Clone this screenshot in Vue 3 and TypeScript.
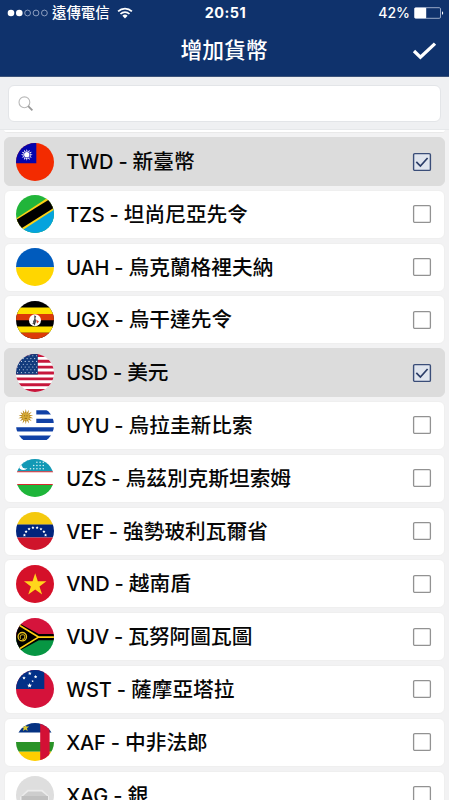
<script setup lang="ts">
interface Currency {
  code: string
  name: string
  selected?: boolean
}

const currencies: Currency[] = [
  { code: 'TWD', name: '新臺幣', selected: true },
  { code: 'TZS', name: '坦尚尼亞先令' },
  { code: 'UAH', name: '烏克蘭格裡夫納' },
  { code: 'UGX', name: '烏干達先令' },
  { code: 'USD', name: '美元', selected: true },
  { code: 'UYU', name: '烏拉圭新比索' },
  { code: 'UZS', name: '烏茲別克斯坦索姆' },
  { code: 'VEF', name: '強勢玻利瓦爾省' },
  { code: 'VND', name: '越南盾' },
  { code: 'VUV', name: '瓦努阿圖瓦圖' },
  { code: 'WST', name: '薩摩亞塔拉' },
  { code: 'XAF', name: '中非法郎' },
  { code: 'XAG', name: '銀' },
]

/** Points of a star with n tips centred on (cx, cy). */
function star(cx: number, cy: number, outer: number, inner: number, n = 5): string {
  const pts: string[] = []
  for (let i = 0; i < n * 2; i++) {
    const r = i % 2 ? inner : outer
    const a = (Math.PI * i) / n - Math.PI / 2
    pts.push(`${(cx + r * Math.cos(a)).toFixed(2)},${(cy + r * Math.sin(a)).toFixed(2)}`)
  }
  return pts.join(' ')
}

const usStars: [number, number][] = []
for (let r = 0; r < 7; r++) {
  for (let c = 0; c < 6; c++) usStars.push([1.6 + c * 3.8 + (r % 2) * 1.9, 1.8 + r * 2.8])
}

const uzStars: [number, number][] = []
for (let r = 0; r < 3; r++) {
  for (let c = 0; c < 5; c++) if (c >= 2 - r) uzStars.push([14.5 + c * 3.2, 3.2 + r * 3.3])
}

const veStars: [number, number][] = []
for (let i = 0; i < 8; i++) {
  const a = ((192 + i * 22.3) * Math.PI) / 180
  veStars.push([19 + 10.8 * Math.cos(a), 25.2 + 9.8 * Math.sin(a)])
}

const wsStars: [number, number, number][] = [
  [13.8, 3.4, 1.9],
  [8, 8, 1.8],
  [19.6, 6.8, 1.8],
  [16.6, 11.2, 1.2],
  [13.6, 15.6, 2.5],
]
</script>

<template>
  <div class="screen">
    <header class="top">
      <div class="status">
        <div class="carrier">
          <svg class="signal" width="42" height="10" viewBox="0 0 42 10">
            <circle cx="4" cy="5" r="3.3" fill="#fff" />
            <circle cx="12.3" cy="5" r="3.3" fill="#fff" />
            <g fill="none" stroke="#a9b7d3" stroke-width="0.8">
              <circle cx="20.6" cy="5" r="2.9" />
              <circle cx="29" cy="5" r="2.9" />
              <circle cx="37.4" cy="5" r="2.9" />
            </g>
          </svg>
          <span class="operator">遠傳電信</span>
          <svg class="wifi" width="16" height="12" viewBox="0 0 16 12">
            <g fill="none" stroke="#fff" stroke-width="1.7">
              <path d="M1.1 4.4a9.8 9.8 0 0 1 13.8 0" />
              <path d="M3.5 7a6.4 6.4 0 0 1 9 0" />
            </g>
            <path d="M5.4 8.8a3.7 3.7 0 0 1 5.2 0L8 11.5z" fill="#fff" />
          </svg>
        </div>
        <span class="clock">20:51</span>
        <div class="power">
          <span>42%</span>
          <svg width="30" height="12" viewBox="0 0 30 12">
            <rect x="0.5" y="0.7" width="26" height="10.6" rx="1.2" fill="none" stroke="#a9b7d3" stroke-width="0.9" />
            <rect x="0.6" y="0.8" width="11.6" height="10.4" rx="0.8" fill="#fff" />
            <path d="M28 4.2q1.2.4 1.2 1.8T28 7.8z" fill="#fff" />
          </svg>
        </div>
      </div>
      <div class="nav">
        <h1>增加貨幣</h1>
        <svg class="done" width="26" height="20" viewBox="0 0 26 20">
          <path d="M3 10L9.4 16.2L24 2.6" fill="none" stroke="#fff" stroke-width="3.3" />
        </svg>
      </div>
    </header>

    <div class="search">
      <label class="field">
        <svg width="16" height="16" viewBox="0 0 16 16" fill="none">
          <circle cx="6.4" cy="6.3" r="5.4" stroke="#b9b9b9" stroke-width="1.1" />
          <path d="M10.2 10.2L14.4 14.4" stroke="#999" stroke-width="1.8" />
        </svg>
        <input type="text" />
      </label>
    </div>

    <main class="list">
      <div class="previous"></div>
      <div v-for="c in currencies" :key="c.code" class="row" :class="{ selected: c.selected }">
        <svg class="flag" viewBox="0 0 38 38">
          <g v-if="c.code === 'TWD'">
            <path fill="#f32b00" d="M0 0h38v38H0z" />
            <path fill="#0404ad" d="M0 0h20.3v20.3H0z" />
            <polygon :points="star(10.8, 11.8, 5.9, 3.2, 12)" fill="#fff" />
            <circle cx="10.8" cy="11.8" r="3.3" fill="#0404ad" />
            <circle cx="10.8" cy="11.8" r="2.7" fill="#fff" />
          </g>
          <g v-else-if="c.code === 'TZS'">
            <path fill="#21b53a" d="M0 0h38v38H0z" />
            <path fill="#05a3dd" d="M38 0v38H0z" />
            <path fill="#fbd116" d="M-4 26.1L42 -4V12.2L-4 42z" />
            <path fill="#000" d="M-4 27.5L42 -1V10.3L-4 39.2z" />
          </g>
          <g v-else-if="c.code === 'UAH'">
            <path fill="#005bbd" d="M0 0h38v19.3H0z" />
            <path fill="#ffd600" d="M0 19.3h38V38H0z" />
          </g>
          <g v-else-if="c.code === 'UGX'">
            <path fill="#000" d="M0 0h38v38H0z" />
            <path fill="#ffe100" d="M0 6.6h38v6.4H0zM0 25.6h38v6.2H0z" />
            <path fill="#dc3b08" d="M0 13h38v6.3H0zM0 31.8h38V38H0z" />
            <circle cx="19" cy="19.2" r="6" fill="#fff" />
            <path d="M18.2 14.3l2 1-.8 2 .9 3-.9 2.2h-1.8l-.7-1.8 1.4-2.6z" fill="#4a4d50" />
            <path d="M20.2 18.6l2.8 1.8-2 2z" fill="#d9452a" />
            <path d="M18.6 22v2.3M16.6 22.6l2 .2" stroke="#222" stroke-width=".9" />
          </g>
          <g v-else-if="c.code === 'USD'">
            <path fill="#fff" d="M0 0h38v38H0z" />
            <path v-for="i in 7" :key="i" :d="`M0 ${(i - 1) * 5.85}h38v2.92H0z`" fill="#c7173c" />
            <path fill="#123a7c" d="M0 0h21.8v20.4H0z" />
            <circle v-for="(s, i) in usStars" v-show="s[0] < 21.3" :key="'s' + i" :cx="s[0]" :cy="s[1]" r=".55" fill="#dce6f4" />
          </g>
          <g v-else-if="c.code === 'UYU'">
            <path fill="#fff" d="M0 0h38v38H0z" />
            <path fill="#1141a6" d="M20.3 4.3H38v4.2H20.3zM20.3 12.7H38v4.2H20.3zM0 21.2h38v4.3H0zM0 29.6h38v4.3H0z" />
            <polygon :points="star(9.8, 10.6, 7.6, 3.8, 14)" fill="#bb8b1f" />
            <circle cx="9.8" cy="10.6" r="3.6" fill="#d5a936" />
            <path d="M8 9.8h1.2M10.4 9.8h1.2M8.6 12.4h2.4" stroke="#7b5910" stroke-width=".7" />
          </g>
          <g v-else-if="c.code === 'UZS'">
            <path fill="#fff" d="M0 0h38v38H0z" />
            <path fill="#1299b5" d="M0 0h38v12.5H0z" />
            <path fill="#d7282f" d="M0 12.3h38v1H0zM0 25h38v1H0z" />
            <path fill="#1eb53a" d="M0 26h38v12H0z" />
            <circle cx="7.4" cy="6.2" r="4.9" fill="#fff" />
            <circle cx="9.7" cy="5.1" r="4.3" fill="#1299b5" />
            <circle v-for="(s, i) in uzStars" :key="i" :cx="s[0]" :cy="s[1]" r=".8" fill="#d5eef3" />
          </g>
          <g v-else-if="c.code === 'VEF'">
            <path fill="#f4c90e" d="M0 0h38v12.7H0z" />
            <path fill="#00247d" d="M0 12.6h38v12.9H0z" />
            <path fill="#cf142b" d="M0 25.4h38V38H0z" />
            <polygon v-for="(s, i) in veStars" :key="i" :points="star(s[0], s[1], 1.6, 0.8)" fill="#fff" />
          </g>
          <g v-else-if="c.code === 'VND'">
            <path fill="#d51029" d="M0 0h38v38H0z" />
            <polygon :points="star(19.2, 20, 11.8, 4.5)" fill="#ffd51c" />
          </g>
          <g v-else-if="c.code === 'VUV'">
            <path fill="#d5143c" d="M0 0h38v19H0z" />
            <path fill="#079643" d="M0 19h38v19H0z" />
            <path fill="#000" d="M-4 1.2L22.8 15.9H38v6.4H22.8L-4 37z" />
            <path d="M0 5.2L22.5 19.1L0 33M22.5 19.1H38" fill="none" stroke="#fdce12" stroke-width="1.7" />
            <circle cx="6.3" cy="18.7" r="4.2" fill="none" stroke="#e9c21c" stroke-width="1.3" />
            <path d="M4.6 20.8q-1.4-3.6 1.7-4t2.4 2.6-2.6 1.4" fill="none" stroke="#c9a717" stroke-width="1.1" />
          </g>
          <g v-else-if="c.code === 'WST'">
            <path fill="#d5123a" d="M0 0h38v38H0z" />
            <path fill="#023087" d="M0 0h28.3v19.1H0z" />
            <polygon v-for="(s, i) in wsStars" :key="i" :points="star(s[0], s[1], s[2], s[2] * 0.48)" fill="#fff" />
          </g>
          <g v-else-if="c.code === 'XAF'">
            <path fill="#fff" d="M0 0h38v38H0z" />
            <path fill="#053282" d="M0 0h38v9.5H0z" />
            <path fill="#299327" d="M0 19h38v9.7H0z" />
            <path fill="#ffce00" d="M0 28.7h38V38H0z" />
            <path fill="#d31035" d="M24.2 0h9.4v38h-9.4z" />
            <polygon :points="star(9.3, 4.8, 4.1, 1.7)" fill="#dcc934" />
          </g>
          <g v-else>
            <path fill="#dedede" d="M0 0h38v38H0z" />
            <path fill="#ececec" d="M4 21L11.5 13.8H26.4L33 20V38H4z" />
            <path fill="#cdcdcd" d="M7.5 19.4L12.4 15.4H25.4L30.6 19.4V38H7.5z" />
            <path fill="#c0c0c0" d="M5.5 20h26.5V38H5.5z" />
          </g>
        </svg>
        <span class="label"><span class="code">{{ c.code }} - </span><span class="name">{{ c.name }}</span></span>
        <svg class="box" width="20" height="20" viewBox="0 0 20 20" fill="none">
          <rect x="1.6" y="1.6" width="16.8" height="16.8" rx="1.2" class="frame" />
          <path v-if="c.selected" d="M4.3 9.8L8.4 14L15.6 6" class="tick" />
        </svg>
      </div>
    </main>
  </div>
</template>

<style>
body {
  overflow: hidden;
}
</style>

<style scoped>
.screen {
  display: flex;
  flex-direction: column;
  height: 800px;
  overflow: hidden;
  background: #f2f2f3;
  font-family: Inter, "Noto Sans CJK TC", sans-serif;
  color: #060606;
}

.top {
  flex: none;
  box-sizing: border-box;
  height: 77px;
  background: #0f326c;
  border-bottom: 1px solid #3b5279;
  color: #fff;
}

.status {
  display: grid;
  grid-template-columns: 1fr auto 1fr;
  align-items: center;
  height: 25px;
  padding: 0 5px 0 7px;
}

.carrier {
  display: flex;
  align-items: center;
}

.operator {
  margin-left: 3px;
  font-size: 14.4px;
  font-weight: 500;
  line-height: 24px;
}

.wifi {
  margin-left: 7px;
}

.clock {
  font-size: 14.4px;
  font-weight: 700;
  letter-spacing: 0.5px;
}

.power {
  display: flex;
  align-items: center;
  justify-content: flex-end;
  gap: 4px;
  font-size: 14px;
  font-weight: 500;
}

.nav {
  display: grid;
  grid-template-columns: 1fr auto 1fr;
  align-items: center;
  height: 51px;
  padding-right: 12px;
}

h1 {
  grid-column: 2;
  margin: 0 0 2px 11px;
  font-size: 21.8px;
  font-weight: 500;
  line-height: 32px;
}

.done {
  justify-self: end;
}

.search {
  flex: none;
  box-sizing: border-box;
  height: 53px;
  padding: 8px 8px 0;
  background: #eff0f2;
  border-bottom: 1px solid #e6e8ea;
}

.field {
  display: flex;
  align-items: center;
  box-sizing: border-box;
  height: 37px;
  padding: 0 9px;
  background: #fff;
  border: 1px solid #e3e5e8;
  border-radius: 6px;
}

.field input {
  flex: 1;
  min-width: 0;
  margin-left: 8px;
  border: 0;
  outline: 0;
  background: none;
  font: inherit;
}

.list {
  flex: 1;
  min-height: 0;
  overflow: hidden;
  padding: 0 4px;
}

.previous {
  height: 3px;
  margin-bottom: 4px;
  background: #fff;
  border-bottom: 1px solid #e9e9e9;
  border-radius: 0 0 5px 5px;
  box-sizing: border-box;
}

.row {
  display: flex;
  align-items: center;
  box-sizing: border-box;
  height: 49px;
  margin-bottom: 3.8px;
  padding: 0 12.5px 0 10.8px;
  background: #fff;
  border: 1px solid #efefef;
  border-radius: 6px;
}

.row.selected {
  background: #dcdcdc;
  border-color: #dcdcdc;
}

.flag {
  flex: none;
  width: 38px;
  height: 38px;
  border-radius: 50%;
}

.label {
  flex: 1;
  margin-left: 12.5px;
  padding-top: 2px;
  font-weight: 500;
  line-height: 30px;
  white-space: pre;
}

.code {
  font-size: 20px;
  letter-spacing: -0.2px;
}

.name {
  font-size: 20.7px;
}

.box {
  flex: none;
}

.frame {
  stroke: #929292;
  stroke-width: 1.3;
}

.selected .frame {
  fill: #e0e5ee;
  stroke: #3a4d78;
  stroke-width: 1.4;
}

.tick {
  stroke: #2b3d68;
  stroke-width: 1.7;
}
</style>
